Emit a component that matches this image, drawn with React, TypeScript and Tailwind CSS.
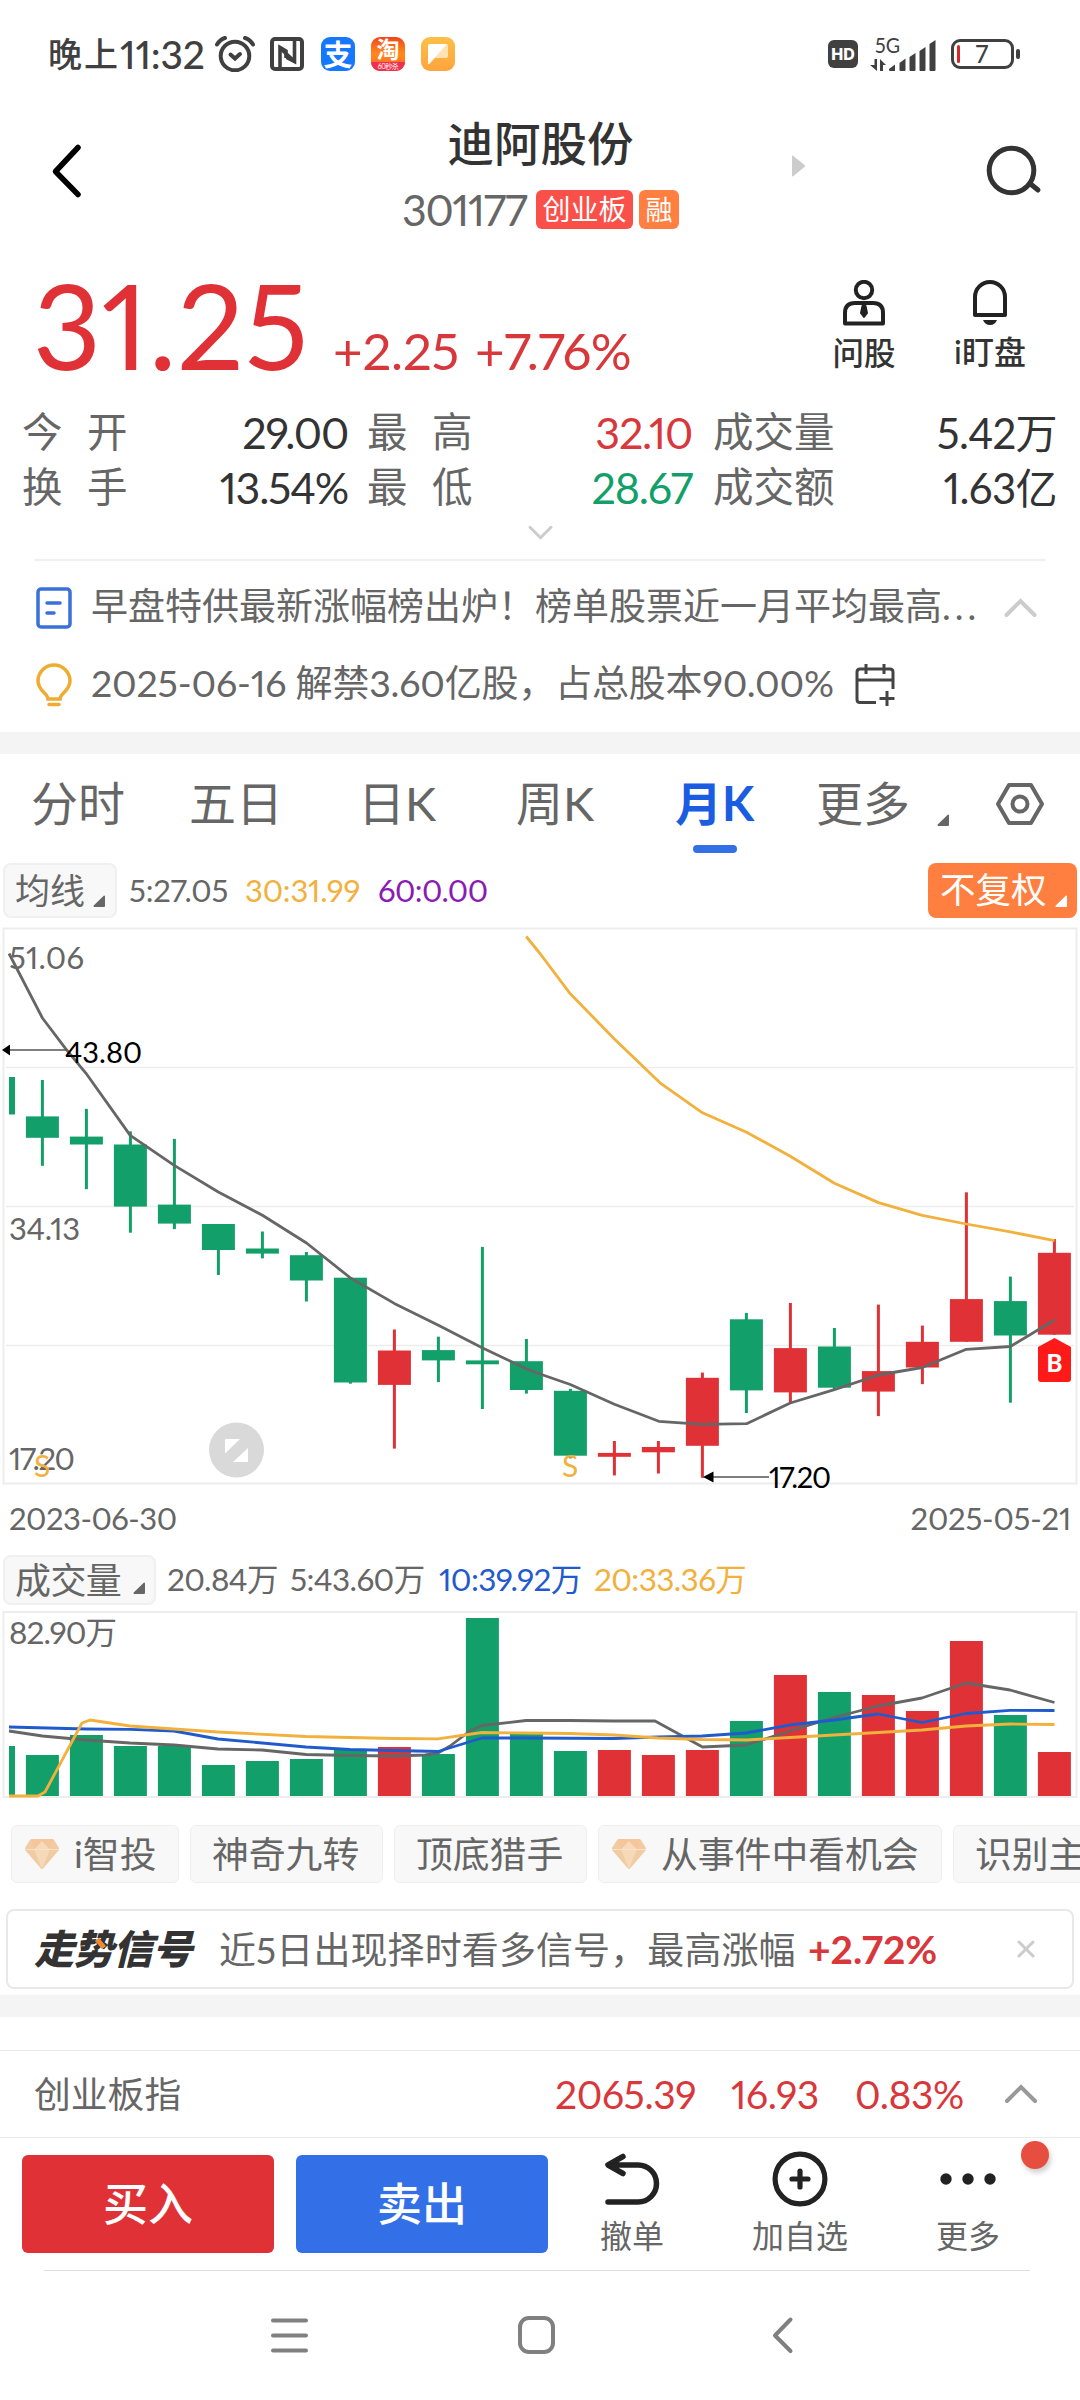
import clsx from "clsx";

const GREEN = "#139f6a";
const RED = "#e03236";
const GRAY = "#666666";
const AMBER = "#f2b03c";
const BLUE = "#1f5bcd";

const slotX = (i: number) => 42.4 + i * 44;

// [high, body top, body bottom, low, rising]
const candles: [number, number, number, number, boolean][] = [
  [1080, 1116.4, 1137.8, 1165.8, false],
  [1108.9, 1136.6, 1144.5, 1189.2, false],
  [1131.4, 1144.5, 1206.6, 1232.7, false],
  [1138.9, 1204.6, 1223.6, 1229.1, false],
  [1224, 1224, 1250, 1275, false],
  [1231.5, 1248.5, 1253.6, 1258.4, false],
  [1252, 1255.2, 1280.5, 1301.5, false],
  [1277.3, 1277.7, 1382.5, 1383.7, false],
  [1329.5, 1350.5, 1384.9, 1448.6, true],
  [1336.7, 1350.1, 1360.4, 1382.1, false],
  [1246.9, 1360.4, 1364.3, 1409, false],
  [1339, 1361.2, 1390, 1393.6, false],
  [1388.9, 1390.8, 1455.7, 1458.4, false],
  [1441, 1452.9, 1456.8, 1475.4, true],
  [1441, 1447, 1452.3, 1473.5, true],
  [1372.6, 1377.8, 1445.8, 1477.8, true],
  [1312.9, 1319.3, 1390.4, 1413, false],
  [1303, 1348.1, 1392.4, 1403.9, true],
  [1328, 1346.5, 1387.7, 1389.2, false],
  [1304.6, 1371.1, 1391.6, 1416.1, true],
  [1325.6, 1341.8, 1367.5, 1384.1, true],
  [1192.3, 1299.1, 1341.8, 1341.8, true],
  [1276.6, 1301.1, 1335.5, 1402.7, false],
  [1239, 1252.8, 1334.7, 1334.7, true],
];

const volumeTops = [
  1755, 1735, 1746, 1746, 1765, 1761, 1759, 1750, 1747, 1754, 1618, 1734, 1751, 1750, 1755, 1750, 1721, 1675,
  1692, 1695, 1711, 1641, 1715, 1752,
];

const ma5 =
  "9,953.5 42.4,1018 65.4,1048.4 86,1073.3 130.2,1135.4 174.2,1165.4 218.3,1192 262.4,1215.3 306.5,1243 350.5,1278 394.3,1303.4 438.4,1325.2 482.1,1347.7 526.2,1368.7 540,1374 570.3,1384.5 614.4,1404.3 658.8,1421.3 702.5,1424.4 746.6,1423.7 790.3,1403 834.4,1389.6 878.5,1375 922.2,1367.5 966.3,1349.3 1010.4,1346.5 1054.5,1320";
const ma30 =
  "526.2,936.5 540,953.5 570.3,993.8 614.4,1038.9 660,1082.8 702.5,1112.8 746.6,1132.2 790.3,1156.3 834.4,1183.2 878.5,1202.6 922.2,1215.3 966.3,1224 1010.4,1231.9 1054.5,1240.6";
const vol5 =
  "9,1731 42.4,1736 86,1740 130,1743 174,1745 218,1749 262,1750 306,1754.5 350,1755.5 394,1756 425,1755 438,1753 450,1746 470,1731 482,1725.5 526,1720.5 570,1720.5 614,1721 655,1721 702.5,1747 746,1745 790,1731 834,1717.5 878,1706 922,1698 966,1683 1010,1690 1054.5,1702.5";
const vol10 =
  "9,1727 86,1729 130,1729.3 174,1731 218,1739 306,1747 350,1749.5 394,1750.5 438,1751.5 482,1738 526,1738 614,1738.5 658,1737 702,1736 746,1733 790,1725 834,1720 878,1714 922,1722.5 966,1713.5 1010,1710.3 1054.5,1710.5";
const vol20 =
  "9,1796 38,1796 45,1792 82,1723 90,1720 130,1726 218,1732 306,1736.5 394,1738.5 438,1738.8 482,1732.5 526,1733 570,1733.5 614,1735 658,1738 702,1739.5 746,1740 790,1737.5 878,1732.5 922,1730 966,1726 1010,1724 1054.5,1724.5";

const chips = [
  { label: "i智投", gem: true, className: "w-[168px]" },
  { label: "神奇九转", gem: false, className: "w-[193px]" },
  { label: "顶底猎手", gem: false, className: "w-[193px]" },
  { label: "从事件中看机会", gem: true, className: "w-[344px]" },
  { label: "识别主力", gem: false, className: "w-[193px]" },
];

const Corner = ({ className }: { className?: string }) => (
  <svg viewBox="0 0 12 12" className={clsx("size-3 shrink-0", className)} fill="currentColor">
    <path d="M11 0.5a1 1 0 0 1 1 1V11a1 1 0 0 1-1 1H1.5a1 1 0 0 1-.8-1.6z" />
  </svg>
);

const Chevron = ({ className, down }: { className?: string; down?: boolean }) => (
  <svg viewBox="0 0 34 20" className={className} fill="none" stroke="currentColor" strokeWidth="4" strokeLinecap="round">
    <path d={down ? "M3 3l14 14L31 3" : "M3 17L17 3l14 14"} />
  </svg>
);

const Gem = () => (
  <svg viewBox="0 0 34 30" className="mr-[15px] h-[30px] w-[34px] shrink-0">
    <path d="M5 1Q6 0 7 0h20q1 0 2 1l5 8q.5 1 0 2L18.500 29q-1.500 2-3 0L0 11q-.5-1 0-2z" fill="#f1cba2" />
    <path d="M6 0h22l-3 10H9z" fill="#f4c699" />
    <path d="M9 10.500h16L17 30z" fill="#f5d9b8" />
    <path d="M9 10.500L17 2l8 8.500z" fill="#f7dabb" />
    <path d="M0 10.500h34" stroke="#f9e2c8" strokeWidth="1" />
  </svg>
);

const StatusBar = () => (
  <div className="flex h-[106px] items-center pt-0.5 pl-12 text-[#404040]">
    <div className="flex w-[167px] items-center text-[34px] font-medium tracking-[2px] whitespace-nowrap">
      晚上<span className="text-[39px] tracking-[-0.200px]">11:32</span>
    </div>
    <svg viewBox="0 0 40 36" className="h-9 w-10" fill="none" stroke="currentColor" strokeWidth="4" strokeLinecap="round">
      <circle cx="20" cy="20" r="14.3" />
      <path d="M2 8.500q3-5 8-6.500M38 8.500q-3-5-8-6.500" />
      <path d="M15.500 18.500l4.500 4 5-4.500" />
    </svg>
    <svg viewBox="0 0 34 34" className="ml-[15px] size-[34px]" fill="none" stroke="currentColor" strokeWidth="4">
      <rect x="2" y="2" width="30" height="30" rx="3" />
      <path d="M10 31V10.500l6 3.500v7" strokeWidth="3.600" />
      <path d="M24.500 4v20.500l-8-4M10 11l14 13" strokeWidth="3.600" />
    </svg>
    <div className="ml-[17px] flex size-[34px] items-center justify-center rounded-[9px] bg-[#1677ff] text-[29px] font-bold text-white">
      支
    </div>
    <div className="ml-4 flex size-[34px] flex-col items-center rounded-[9px] bg-linear-to-b from-[#f2401c] via-[#ff8a1c] to-[#ff5a2a] text-white">
      <span className="h-[25px] text-[23px] leading-[25px] font-bold">淘</span>
      <span className="h-[9px] w-full rounded-b-[9px] bg-[#f0304c] text-center text-[7px] leading-[8px] tracking-[-0.500px] whitespace-nowrap">60秒杀</span>
    </div>
    <div className="ml-4 flex size-[34px] items-center justify-center rounded-[9px] bg-linear-to-b from-[#fcbf48] to-[#ffa43c]">
      <svg viewBox="0 0 20 20" className="size-5">
        <path d="M2 0h16a2 2 0 0 1 2 2v10a2 2 0 0 1-2 2H7l-6 6q-1 0-1-1V2a2 2 0 0 1 2-2z" fill="#ffe3b4" />
        <path d="M2 0h17L1 20q-1 0-1-1V2a2 2 0 0 1 2-2z" fill="#fff" />
      </svg>
    </div>
    <div className="ml-[373px] flex h-7 w-[30px] items-center justify-center rounded-[6px] bg-[#404040] font-['Inter'] text-[16px] font-extrabold text-white">
      HD
    </div>
    <svg viewBox="0 0 68 36" className="ml-3 h-9 w-[68px] overflow-visible" fill="currentColor">
      <text x="5" y="17" fontSize="21" textLength="25" lengthAdjust="spacingAndGlyphs">
        5G
      </text>
      <path d="M4.500 23h2.500v12l-7-6h4.500zM10 35V23l6 6h-3v6zM19 33l6-4.500V35h-5q-1 0-1-1zM29.500 27l6-4.500V34q0 1-1 1h-4q-1 0-1-1zM39.500 21l6-4V34q0 1-1 1h-4q-1 0-1-1zM49.500 15l6-4V34q0 1-1 1h-4q-1 0-1-1zM59.500 8l6-4V34q0 1-1 1h-4q-1 0-1-1z" />
    </svg>
    <div className="ml-[13px] flex h-[30px] w-[63px] items-center rounded-[9px] border-3 border-[#404040] px-[3px]">
      <span className="h-[18px] w-[3px] rounded-full bg-[#d92626]" />
      <span className="flex-1 pr-1 text-center text-[24px] leading-none font-medium">7</span>
    </div>
    <span className="ml-0.5 h-2.5 w-1 rounded-full bg-[#404040]" />
  </div>
);

const Header = () => (
  <header className="flex h-[146px] items-start">
    <svg viewBox="0 0 34 56" className="mt-[37px] ml-[49px] h-14 w-[34px]" fill="none" stroke="#000" strokeWidth="5.500" strokeLinecap="round" strokeLinejoin="round">
      <path d="M29 4.500L6.500 28.500 29 51.500" />
    </svg>
    <div className="ml-[319px] flex w-[277px] flex-col items-center">
      <h1 className="mt-[14px] text-[46.500px] leading-[46px] font-medium text-[#333]">迪阿股份</h1>
      <div className="mt-[19px] flex h-12 w-full items-center">
        <span className="w-[134px] pt-px text-[43px] tracking-[-1.400px] text-[#666]">301177</span>
        <span className="flex h-[39px] w-[97px] items-center justify-center rounded-[6px] bg-[#f9504a] text-[28px] text-white">创业板</span>
        <span className="ml-1.5 flex h-[39px] w-10 items-center justify-center rounded-[6px] bg-[#ff7f40] text-[27px] text-white">融</span>
      </div>
    </div>
    <svg viewBox="0 0 13 22" className="mt-[49px] ml-[113px] h-[22px] w-[13px]">
      <path d="M0 1.500Q0 0 1.500 1l11 9q1 1 0 2l-11 9Q0 22 0 20.500z" fill="#ccc" />
    </svg>
    <svg viewBox="0 0 56 52" className="mt-[39px] mr-[38px] ml-auto h-[52px] w-14" fill="none" stroke="#333" strokeWidth="5" strokeLinecap="round">
      <circle cx="25.500" cy="25.500" r="22.300" />
      <path d="M44 38.500l8 6.500" />
    </svg>
  </header>
);

const Quote = () => (
  <section className="flex h-[146px] justify-between pl-[33px]">
    <div className="flex items-baseline text-[#e03236]">
      <span className="w-[300px] text-[118px] leading-[146px] tracking-[0.500px]">31.25</span>
      <span className="w-[142px] text-[51px] tracking-[-0.200px] text-[#d8383b]">+2.25</span>
      <span className="text-[51px] tracking-[-0.500px] text-[#d8383b]">+7.76%</span>
    </div>
    <div className="flex pt-7 pr-[30px] text-[31.500px] leading-none font-medium text-[#333]">
      <div className="flex w-[122px] flex-col items-center">
        <svg viewBox="0 0 42 46" className="h-[46px] w-[42px]" fill="none" stroke="#222" strokeWidth="4" strokeLinejoin="round">
          <circle cx="21" cy="10" r="8.200" />
          <path d="M2 43.500V33q0-10 10-10h18q10 0 10 10v10.500z" />
          <path d="M19.500 26h3l1.500 7-3 4-3-4z" fill="#222" strokeWidth="2" />
        </svg>
        <span className="mt-3">问股</span>
      </div>
      <div className="ml-[5px] flex w-[120px] flex-col items-center">
        <svg viewBox="0 0 34 46" className="h-[46px] w-[34px]" fill="none" stroke="#222" strokeWidth="4" strokeLinejoin="round">
          <path d="M2 35V17a15 15 0 0 1 30 0v18z" />
          <path d="M10 40h14q-2 5-7 5t-7-5z" fill="#222" stroke="none" />
        </svg>
        <span className="mt-2.5 text-[32px]">i盯盘</span>
      </div>
    </div>
  </section>
);

const stats = [
  ["今开", "29.00", "最高", "32.10", "成交量", "5.42万"],
  ["换手", "13.54%", "最低", "28.67", "成交额", "1.63亿"],
];

const Stats = () => (
  <section className="flex h-[162px] flex-col items-center pt-[7px] text-[40.500px] text-[#333]">
    {stats.map(([a, av, b, bv, c, cv], i) => (
      <div key={a} className="flex h-[55px] w-full items-center pl-[22px]">
        <span className="w-[130px] tracking-[24.500px] text-[#666]">{a}</span>
        <span className="w-[196px] text-right text-[43px] tracking-[-1.200px]">{av}</span>
        <span className="ml-[19px] w-[130px] tracking-[24.500px] text-[#666]">{b}</span>
        <span className={clsx("w-[195px] text-right text-[43px] tracking-[-1.200px]", i ? "text-[#139f6a]" : "text-[#d8383b]")}>{bv}</span>
        <span className="ml-[21px] w-[130px] text-[#666]">{c}</span>
        <span className="w-[214px] text-right text-[42px] tracking-[-0.600px]">{cv}</span>
      </div>
    ))}
    <Chevron down className="mt-2.5 h-[15px] w-[27px] text-[#ccc]" />
  </section>
);

const Notices = () => (
  <section className="mx-[34px] h-[173px] border-t-2 border-[#f0f0f0] pt-[9px] text-[37px] text-[#666]">
    <div className="flex h-[76px] items-center">
      <svg viewBox="0 0 36 42" className="ml-0.5 h-[42px] w-9" fill="none" stroke="#3a70d8" strokeWidth="3.500" strokeLinecap="round">
        <rect x="2" y="2" width="32" height="38" rx="3" />
        <path d="M11 16h13M11 26h7" />
      </svg>
      <span className="ml-[19px] w-[906px] pb-1.5 whitespace-nowrap">
        早盘特供最新涨幅榜出炉！榜单股票近一月平均最高<span className="tracking-[4px]">...</span>
      </span>
      <Chevron className="ml-1.5 h-5 w-[35px] text-[#ccc]" />
    </div>
    <div className="flex h-[78px] items-center">
      <svg viewBox="0 0 38 44" className="ml-px h-11 w-[38px]" fill="none" stroke="#f0ac30" strokeWidth="3.500" strokeLinecap="round">
        <path d="M13 36c0-6-10-8-10-18a16 16 0 0 1 32 0c0 10-10 12-10 18zM14 41.500h10" />
      </svg>
      <span className="ml-[18px] w-[763px] pb-1 tracking-[-0.200px] whitespace-nowrap">
        <span className="text-[37.500px]">2025-06-16</span> 解禁<span className="text-[37.500px]">3.60</span>亿股，占总股本<span className="text-[37.500px]">90.00%</span>
      </span>
      <svg viewBox="0 0 42 42" className="h-[42px] w-[42px]" fill="none" stroke="#444" strokeWidth="3">
        <path d="M22 38.500H6q-3 0-3-3V8q0-3 3-3h30q3 0 3 3v17M3 16h36M12 0v10M30 0v10M33 27v15M25.500 34.500h15" />
      </svg>
    </div>
  </section>
);

const Tabs = () => (
  <nav className="flex h-[106px] text-[47px] leading-[98px] text-[#666]">
    <span className="ml-[31px] w-[158px]">分时</span>
    <span className="w-[169px]">五日</span>
    <span className="w-[158px]">日K</span>
    <span className="w-[159px]">周K</span>
    <span className="relative w-[141px] font-bold text-[#1a5de0]">
      月K
      <i className="absolute top-[91px] left-[18px] h-2 w-11 rounded-full bg-[#3370e6]" />
    </span>
    <span>更多</span>
    <Corner className="mt-[60px] ml-[27px]" />
    <svg viewBox="0 0 48 44" className="mt-7 ml-[47px] h-11 w-12" fill="none" stroke="currentColor" strokeWidth="4" strokeLinejoin="round">
      <path d="M13 3h22l11 19-11 19H13L2 22z" />
      <circle cx="24" cy="22" r="7.500" />
    </svg>
  </nav>
);

const MaRow = () => (
  <div className="mx-[3px] flex h-[58px] items-center pt-0.5 text-[31px] text-[#666]">
    <div className="flex h-[55px] w-[114px] items-center rounded-[8px] border-2 border-[#f0f0f0] bg-[#f8f8f8] pl-[10px] text-[35px]">
      均线
      <Corner className="mt-[22px] ml-2" />
    </div>
    <span className="ml-3 w-[116px] tracking-[-0.200px]">5:27.05</span>
    <span className="w-[133px] tracking-[-0.200px] text-[#f2b03c]">30:31.99</span>
    <span className="tracking-[-0.600px] text-[#8a1cb4]">60:0.00</span>
    <div className="ml-auto flex h-[55px] w-[149px] items-center rounded-[8px] bg-[#ff7f40] pl-3 text-[35.500px] text-white">
      不复权
      <Corner className="mt-[22px] ml-2" />
    </div>
  </div>
);

const KChart = () => (
  <svg viewBox="0 928 1080 556" className="block h-[556px] w-full overflow-visible" fontSize="31">
    <g fill="none" stroke="#ededed">
      <rect x="3.500" y="928.500" width="1073" height="555" strokeWidth="2" />
      <path d="M6 1067.500H1074M6 1206.500H1074M6 1345.500H1074" strokeWidth="1.500" />
    </g>
    <rect x="9" y="1077" width="6" height="37.500" fill={GREEN} />
    {candles.map(([high, top, bottom, low, up], i) => (
      <g key={i} fill={up ? RED : GREEN}>
        <rect x={slotX(i) - 1.5} y={high} width="3" height={low - high} />
        <rect x={slotX(i) - 16.5} y={top} width="33" height={bottom - top} />
      </g>
    ))}
    <g fill="none" strokeWidth="2.800" strokeLinejoin="round">
      <polyline points={ma30} stroke={AMBER} />
      <polyline points={ma5} stroke={GRAY} />
    </g>
    <g fill={GRAY}>
      <text x="9" y="969" textLength="75">51.06</text>
      <text x="9" y="1240" textLength="71">34.13</text>
      <text x="9" y="1469.500" textLength="66">17.20</text>
    </g>
    <g fill={AMBER} fontSize="30">
      <text x="34" y="1477">S</text>
      <text x="562" y="1477">S</text>
    </g>
    <g>
      <path d="M10 1050H66M712 1477H769" stroke="#555" strokeWidth="1.500" />
      <path d="M2 1050l8-5.500v11zM703 1477l10.500-5.500v11z" />
      <text x="65" y="1063" fontSize="29" textLength="77">43.80</text>
      <text x="769" y="1488" fontSize="29" textLength="62">17.20</text>
    </g>
    <circle cx="236.500" cy="1450" r="27.500" fill="#d9d9d9" />
    <path d="M226 1439h14l-15 14.500v-13.500q0-1 1-1zM248 1448v13q0 1-1 1h-14z" fill="#fff" />
    <path d="M1054.500 1338l16.500 9v32q0 3-3 3h-27q-3 0-3-3v-32z" fill="#ff1a1a" />
    <text x="1054.500" y="1372" fontSize="24" fontWeight="900" textAnchor="middle" fill="#fff">B</text>
  </svg>
);

const VolumeHeader = () => (
  <div className="mt-2 flex h-[61px] items-center pb-px pl-[3px] text-[31.500px] tracking-[-0.600px] text-[#666]">
    <div className="flex h-[50px] w-[153px] items-center rounded-[8px] border-2 border-[#f0f0f0] bg-[#f8f8f8] pl-[10px] text-[36px]">
      成交量
      <Corner className="mt-[16px] ml-3" />
    </div>
    <span className="ml-[11px] w-[123px]">20.84万</span>
    <span className="w-[149px]">5:43.60万</span>
    <span className="w-[155px] text-[#1f5bcd]">10:39.92万</span>
    <span className="text-[#f2b03c]">20:33.36万</span>
  </div>
);

const VolumeChart = () => (
  <svg viewBox="0 1611 1080 187" className="block h-[187px] w-full">
    <rect x="3.500" y="1612" width="1073" height="185" fill="none" stroke="#ededed" strokeWidth="2" />
    <text x="9" y="1644" fontSize="31.500" fill={GRAY} textLength="108">82.90万</text>
    <rect x="9" y="1746" width="6" height="50" fill={GREEN} />
    {volumeTops.map((top, i) => (
      <rect key={i} x={slotX(i) - 16.5} y={top} width="33" height={1796 - top} fill={candles[i][4] ? RED : GREEN} />
    ))}
    <g fill="none" strokeWidth="2.800" strokeLinejoin="round">
      <polyline points={vol5} stroke={GRAY} />
      <polyline points={vol10} stroke={BLUE} />
      <polyline points={vol20} stroke={AMBER} />
    </g>
  </svg>
);

const Chips = () => (
  <div className="mt-[27px] flex h-[58px] gap-[11px] overflow-hidden pl-[11px] text-[36.800px] text-[#666]">
    {chips.map(({ label, gem, className }) => (
      <div
        key={label}
        className={clsx("flex shrink-0 items-center rounded-[6px] border border-[#eee] bg-[#f8f8f8] whitespace-nowrap", gem ? "pl-[13px]" : "pl-[21px]", className)}
      >
        {gem && <Gem />}
        {label}
      </div>
    ))}
  </div>
);

const Signal = () => (
  <div className="mx-1.5 mt-[26px] mb-1.5 flex h-20 items-center rounded-[8px] border-2 border-[#e8e8e8] pl-[26px] text-[37px] text-[#666]">
    <span className="relative w-[185px] text-[40px] font-black tracking-[-0.500px] text-[#333] italic">
      走势信号
      <i className="absolute top-[9px] left-[64px] h-[11px] w-[5px] -rotate-40 bg-[#f08a30]" />
    </span>
    <span className="w-[589px] tracking-[0.100px] whitespace-nowrap">近5日出现择时看多信号，最高涨幅</span>
    <span className="text-[39px] font-bold text-[#d8383b]">+2.72%</span>
    <svg viewBox="0 0 18 18" className="mr-[37px] ml-auto size-[18px]" stroke="#ccc" strokeWidth="3" strokeLinecap="round">
      <path d="M2 2l14 14M16 2L2 16" />
    </svg>
  </div>
);

const IndexBar = () => (
  <div className="flex h-[88px] items-center border-y border-[#ececec] pl-[34px] text-[39px] text-[#d8383b]">
    <span className="w-[521px] text-[36.800px] text-[#666]">创业板指</span>
    <span className="w-[176px] tracking-[-0.400px]">2065.39</span>
    <span className="w-[124px] tracking-[-0.400px]">16.93</span>
    <span className="w-[149px] tracking-[-0.500px]">0.83%</span>
    <Chevron className="h-5 w-[34px] text-[#999]" />
  </div>
);

const TradeBar = () => (
  <div className="flex h-[132px] pt-[17px] pl-[22px] text-[32px] leading-none text-[#666]">
    <button className="h-[98px] w-[252px] rounded-[6px] bg-[#e03236] text-[45px] font-medium text-white">买入</button>
    <button className="ml-[22px] h-[98px] w-[252px] rounded-[6px] bg-[#3370e8] text-[45px] font-medium text-white">卖出</button>
    <div className="flex w-[168px] flex-col items-center">
      <svg viewBox="0 0 56 56" className="-mt-1 h-14 w-14" fill="none" stroke="#222" strokeWidth="5.500" strokeLinecap="round" strokeLinejoin="round">
        <path d="M19 5.500L4 14l15 8.500M6 14h28a18 18 0 0 1 0 37H4" />
      </svg>
      <span className="mt-[13px]">撤单</span>
    </div>
    <div className="flex w-[168px] flex-col items-center">
      <svg viewBox="0 0 56 56" className="-mt-1 size-14" fill="none" stroke="#222" strokeWidth="5.200" strokeLinecap="round">
        <circle cx="28" cy="28" r="24.900" />
        <path d="M20 28h16M28 20v16" />
      </svg>
      <span className="mt-[13px]">加自选</span>
    </div>
    <div className="relative flex w-[168px] flex-col items-center">
      <svg viewBox="0 0 56 56" className="-mt-1 size-14" fill="#222">
        <circle cx="6" cy="28" r="5.700" />
        <circle cx="28" cy="28" r="5.700" />
        <circle cx="50" cy="28" r="5.700" />
      </svg>
      <span className="mt-[13px]">更多</span>
      <i className="absolute -top-[14px] left-[137px] size-7 rounded-full bg-[#e64e40] shadow-[2px_4px_5px_rgba(0,0,0,0.18)]" />
    </div>
  </div>
);

const SystemNav = () => (
  <div className="mr-[50px] ml-11 flex h-[130px] border-t border-[#dedede]">
    <svg viewBox="44 2271 986 129" className="h-[129px] w-[986px]" fill="none" stroke="#808080" strokeWidth="4" strokeLinecap="round" strokeLinejoin="round">
      <path d="M273 2320.500h33M273 2335.500h33M273 2350.500h33" />
      <rect x="520" y="2318" width="33" height="34" rx="9" />
      <path d="M790.500 2319.500L775 2335.500l15.500 15.500" />
    </svg>
  </div>
);

export default function App() {
  return (
    <div className="h-[2400px] w-[1080px] overflow-hidden bg-white font-['Lato','Noto_Sans_CJK_SC',sans-serif] leading-none proportional-nums">
      <StatusBar />
      <Header />
      <Quote />
      <Stats />
      <div className="-mt-px">
        <Notices />
      </div>
      <div className="h-[22px] bg-[#f4f4f4]" />
      <Tabs />
      <MaRow />
      <div className="mt-[10px]">
        <KChart />
      </div>
      <div className="flex h-[58px] items-end justify-between px-[9px] pb-2 text-[31px] tracking-[-0.500px] text-[#666]">
        <span>2023-06-30</span>
        <span className="tracking-[-0.200px]">2025-05-21</span>
      </div>
      <VolumeHeader />
      <VolumeChart />
      <Chips />
      <Signal />
      <div className="mb-[33px] h-[22px] bg-[#f4f4f4]" />
      <IndexBar />
      <TradeBar />
      <SystemNav />
    </div>
  );
}
